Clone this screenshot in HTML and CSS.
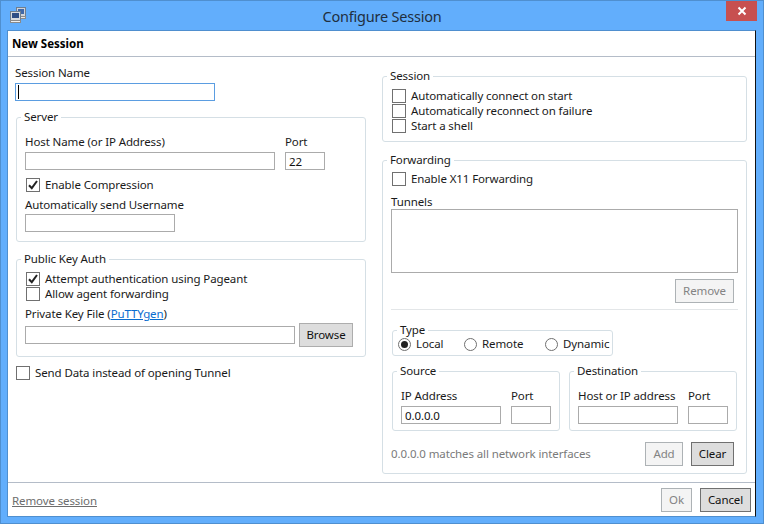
FILE: index.html
```html
<!DOCTYPE html>
<html lang="en">
<head>
<meta charset="utf-8">
<title>Configure Session</title>
<link rel="stylesheet" href="styles.css">
</head>
<body>
<div class="window">
  <div class="titlebar">
    <svg class="appicon" width="16" height="16" viewBox="0 0 16 16">
      <rect x="6.5" y=".5" width="9" height="9" fill="#cfd3d8" stroke="#6f7f90"/>
      <rect x="8" y="2" width="6" height="5" fill="#3f68a8"/>
      <rect x="6.5" y="9.5" width="9" height="2" fill="#e6e6e6" stroke="#8a8a8a"/>
      <rect x=".5" y="4.5" width="10" height="9" fill="#d8dbdf" stroke="#6f7f90"/>
      <rect x="2" y="6" width="7" height="5" fill="#2f4f86"/>
      <rect x=".5" y="13.5" width="10" height="2" fill="#eeeeee" stroke="#8a8a8a"/>
    </svg>
    <div class="title">Configure Session</div>
    <div class="close">
      <svg width="10" height="10" viewBox="0 0 10 10"><path d="M1.5 1.5l7 7M8.5 1.5l-7 7" stroke="#fff" stroke-width="2"/></svg>
    </div>
  </div>

  <div class="client">
    <div class="header">New Session</div>

    <div class="content">
      <div class="col-left">
        <label class="lbl">Session Name</label>
        <input class="txt txt-focus" type="text">

        <fieldset class="group server">
          <legend>Server</legend>
          <div class="row-fields">
            <div>
              <label class="lbl">Host Name (or IP Address)</label>
              <input class="txt w250" type="text">
            </div>
            <div>
              <label class="lbl">Port</label>
              <input class="txt w40" type="text" value="22">
            </div>
          </div>
          <div class="check spaced">
            <span class="box"><svg width="12" height="12" viewBox="0 0 12 12"><path d="M2 6.2l2.8 3L10 2" fill="none" stroke="#222" stroke-width="2"/></svg></span>
            Enable Compression
          </div>
          <label class="lbl userlbl">Automatically send Username</label>
          <input class="txt w150" type="text">
        </fieldset>

        <fieldset class="group pubkey">
          <legend>Public Key Auth</legend>
          <div class="check">
            <span class="box"><svg width="12" height="12" viewBox="0 0 12 12"><path d="M2 6.2l2.8 3L10 2" fill="none" stroke="#222" stroke-width="2"/></svg></span>
            Attempt authentication using Pageant
          </div>
          <div class="check"><span class="box"></span>Allow agent forwarding</div>
          <label class="lbl keylbl">Private Key File (<a href="#">PuTTYgen</a>)</label>
          <div class="browse-row">
            <input class="txt w270" type="text">
            <button class="btn w54">Browse</button>
          </div>
        </fieldset>

        <div class="check senddata"><span class="box"></span>Send Data instead of opening Tunnel</div>
      </div>

      <div class="col-right">
        <fieldset class="group session">
          <legend>Session</legend>
          <div class="check"><span class="box"></span>Automatically connect on start</div>
          <div class="check"><span class="box"></span>Automatically reconnect on failure</div>
          <div class="check"><span class="box"></span>Start a shell</div>
        </fieldset>

        <fieldset class="group forwarding">
          <legend>Forwarding</legend>
          <div class="check x11"><span class="box"></span>Enable X11 Forwarding</div>
          <label class="lbl tunlbl">Tunnels</label>
          <div class="listbox"></div>
          <div class="btn-row"><button class="btn off w59">Remove</button></div>
          <div class="divider"></div>

          <fieldset class="group type">
            <legend>Type</legend>
            <div class="radios">
              <div class="radio-item w66"><span class="radio on"></span>Local</div>
              <div class="radio-item w81"><span class="radio"></span>Remote</div>
              <div class="radio-item"><span class="radio"></span>Dynamic</div>
            </div>
          </fieldset>

          <div class="endpoints">
            <fieldset class="group endpoint">
              <legend>Source</legend>
              <div class="row-fields">
                <div><label class="lbl">IP Address</label><input class="txt w100" type="text" value="0.0.0.0"></div>
                <div><label class="lbl">Port</label><input class="txt w40" type="text"></div>
              </div>
            </fieldset>
            <fieldset class="group endpoint">
              <legend>Destination</legend>
              <div class="row-fields">
                <div><label class="lbl">Host or IP address</label><input class="txt w100" type="text"></div>
                <div><label class="lbl">Port</label><input class="txt w40" type="text"></div>
              </div>
            </fieldset>
          </div>

          <div class="note-row">
            <span class="note">0.0.0.0 matches all network interfaces</span>
            <button class="btn off w38">Add</button>
            <button class="btn dark w43">Clear</button>
          </div>
        </fieldset>
      </div>
    </div>

    <div class="footer">
      <a class="remove" href="#">Remove session</a>
      <button class="btn off w31">Ok</button>
      <button class="btn dark w51">Cancel</button>
    </div>
  </div>
</div>
</body>
</html>
```

FILE: styles.css
```css
*{margin:0;padding:0;box-sizing:border-box;}
html,body{height:100%;}
body{overflow:hidden;background:#62aefc;color:#1a1a1a;font:11.5px/16px "Noto Sans","Open Sans",sans-serif;letter-spacing:-.11px;}

.window{width:764px;height:524px;display:flex;flex-direction:column;border:1px solid #4f8fcf;background:#62aefc;}

/* title bar */
.titlebar{height:29px;flex:none;display:flex;align-items:flex-start;position:relative;}
.appicon{margin:6px 0 0 9px;}
.title{position:absolute;left:0;right:0;top:5px;text-align:center;font-size:14.5px;line-height:20px;letter-spacing:-.22px;color:#1f2f40;}
.close{position:absolute;top:0;right:6px;width:31px;height:20px;background:#c75050;display:flex;align-items:center;justify-content:center;}

/* client area */
.client{flex:1;margin:0 7px 6px 6px;background:#fff;display:flex;flex-direction:column;border-top:1px solid #4f8fcf;border-left:1px solid #4f8fcf;border-right:1px solid #111;border-bottom:1px solid #4f8fcf;}
.header{height:26px;flex:none;padding:5px 0 0 4px;font-weight:bold;letter-spacing:0;color:#000;border-bottom:1px solid #b4bcc8;}
.content{flex:1;display:flex;padding:0 0 0 7px;}
.col-left{width:351px;padding-top:8px;}
.col-right{width:365px;margin-left:16px;padding-top:11px;}
.footer{height:34px;flex:none;display:flex;align-items:flex-start;gap:8px;padding:5px 4px 0 4px;border-top:1px solid #b4bcc8;}
.remove{margin-right:auto;margin-top:5px;color:#6d6d6d;text-decoration:underline;}

/* groups, height counts the half of the legend above the border */
.group{border:1px solid #d5dfe5;border-radius:3px;min-width:0;}
.group legend{margin-left:-4px;padding:0 3px;line-height:16px;}
.server{margin:8px 0 0 1px;height:133px;padding:9px 8px 0 8px;}
.pubkey{margin:9px 0 0 1px;height:106px;padding:4px 8px 0 8px;}
.session{height:74px;padding:4px 8px 0 9px;}
.session legend{margin-left:-5px;}
.forwarding{margin-top:10px;height:322px;padding:3px 8px 0 8px;}
.type{margin:12px 0 0 1px;width:221px;height:34px;padding:0 0 0 5px;}
.type legend{margin-left:-1px;}
.endpoints{display:flex;gap:9px;margin-top:7px;margin-left:1px;}
.endpoint{width:168px;height:68px;padding:9px 8px 0 8px;}

/* form bits */
.lbl{display:block;height:16px;}
.lbl a{color:#0a6ccf;}
.txt{display:block;height:18px;border:1px solid #ababab;padding:0 3px;font:inherit;letter-spacing:inherit;color:#111;background:#fff;outline:0;}
.txt-focus{width:200px;margin-top:2px;border-color:#5b9de1;background:linear-gradient(#000,#000) 2px 1px/1px 14px no-repeat #fff;}
.w250{width:250px;}
.w40{width:40px;}
.w150{width:150px;}
.w270{width:270px;}
.w100{width:100px;}
.row-fields{display:flex;gap:10px;}
.row-fields .lbl{margin-bottom:2px;}
.check{display:flex;align-items:center;gap:5px;height:15px;}
.box{width:14px;height:14px;flex:none;border:1px solid #707070;background:#fff;display:flex;align-items:center;justify-content:center;}
.spaced{margin:7px 0 5px 1px;}
.userlbl{margin-bottom:1px;}
.pubkey .check{margin-left:1px;}
.keylbl{margin-top:5px;}
.browse-row{display:flex;gap:4px;align-items:flex-start;margin-top:1px;}
.browse-row .txt{margin-top:3px;}
.senddata{margin:8px 0 0 1px;}
.x11{margin-left:1px;}

.btn{height:24px;flex:none;border:1px solid #adadad;background:#ddd;font:inherit;letter-spacing:inherit;color:#111;}
.btn.dark{border-color:#707070;}
.btn.off{background:#f4f4f4;border-color:#adb2b5;color:#838383;}
.w54{width:54px;}
.w59{width:59px;}
.w38{width:38px;}
.w43{width:43px;}
.w31{width:31px;}
.w51{width:51px;}

.tunlbl{margin-top:8px;}
.listbox{height:64px;margin-top:-1px;border:1px solid #ababab;background:#fff;}
.btn-row{display:flex;justify-content:flex-end;margin:6px 4px 0 0;}
.divider{height:1px;margin-top:6px;background:#e3e6e8;}
.radios{display:flex;align-items:center;height:16px;margin-top:-2px;}
.radio-item{display:flex;align-items:center;gap:5px;}
.w66{width:66px;}
.w81{width:81px;}
.radio{width:13px;height:13px;flex:none;border:1px solid #707070;border-radius:50%;background:#fff;display:flex;align-items:center;justify-content:center;}
.radio.on::after{content:"";width:7px;height:7px;border-radius:50%;background:#222;}
.note-row{display:flex;align-items:center;gap:8px;margin:11px 4px 0 0;}
.note{margin-right:auto;color:#7a7a7a;}
```
